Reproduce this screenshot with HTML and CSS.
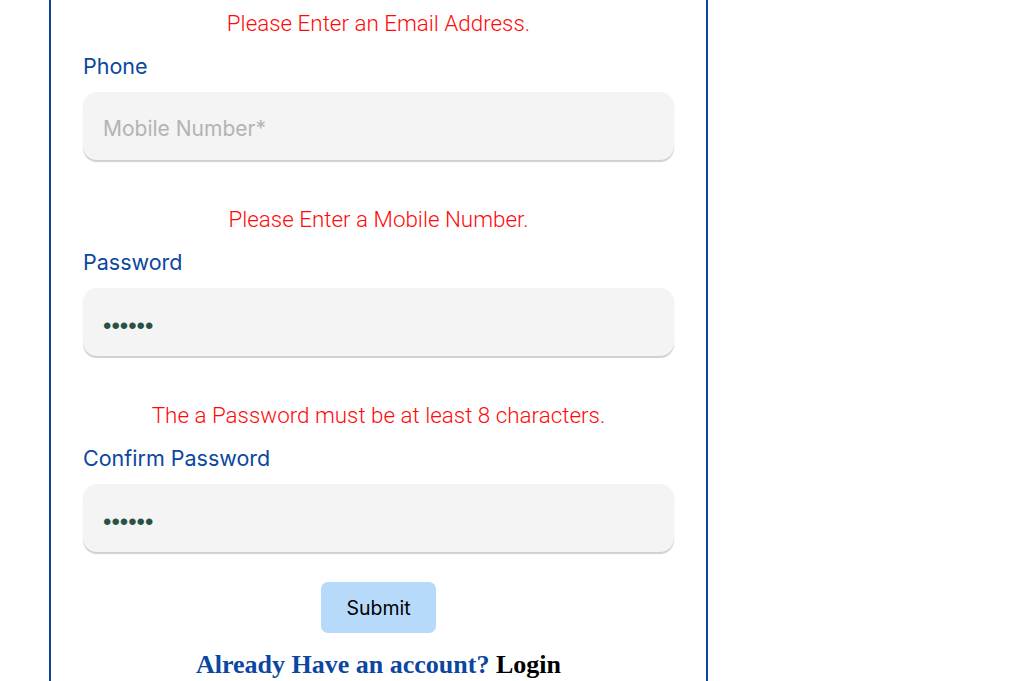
FILE: index.html
```html
<!DOCTYPE html>
<html lang="en">
<head>
<meta charset="utf-8">
<title>Register</title>
<link rel="stylesheet" href="styles.css">
</head>
<body>
<main class="card">
  <form class="form">
    <p class="error">Please Enter an Email Address.</p>
    <div class="field">
      <label class="label" for="phone">Phone</label>
      <input class="input" id="phone" type="text" placeholder="Mobile Number*">
    </div>
    <p class="error">Please Enter a Mobile Number.</p>
    <div class="field">
      <label class="label" for="pw">Password</label>
      <input class="input input-pw" id="pw" type="password" value="123456">
    </div>
    <p class="error">The a Password must be at least 8 characters.</p>
    <div class="field field-last">
      <label class="label" for="cpw">Confirm Password</label>
      <input class="input input-pw" id="cpw" type="password" value="123456">
    </div>
    <div class="actions">
      <button class="submit" type="button">Submit</button>
    </div>
    <p class="switch">Already Have an account? <a class="switch-link" href="#">Login</a></p>
  </form>
</main>
</body>
</html>
```
FILE: styles.css
```css
html, body {
  margin: 0;
  padding: 0;
  background: #ffffff;
  overflow: hidden;
}
body {
  font-family: "Inter", "Noto Sans", sans-serif;
}
.card {
  box-sizing: border-box;
  width: 659px;
  margin: -20px 0 0 49px;
  padding: 29px 32px 40px;
  border: 2px solid #0b47a0;
}
.form {
  display: flex;
  flex-direction: column;
}
.error {
  margin: 0;
  padding-top: 0;
  font-family: "Roboto", sans-serif;
  font-weight: 300;
  font-size: 22.4px;
  line-height: 25px;
  color: #ff0a0a;
  text-align: center;
}
.field {
  display: flex;
  flex-direction: column;
  margin: 18px 0 47px;
}
.field-last {
  margin-bottom: 30px;
}
.label {
  font-size: 21.5px;
  line-height: 24px;
  color: #0b47a0;
  margin-bottom: 14px;
}
.input {
  box-sizing: border-box;
  width: 100%;
  height: 68px;
  border: none;
  border-radius: 14px;
  background: #f4f4f4;
  box-shadow: 0 2px 1px #cfcfcf;
  padding: 4px 20px 0;
  font-family: "Inter", sans-serif;
  font-size: 21px;
  color: #2a5241;
  outline: none;
}
.input::placeholder {
  color: #b3b3b3;
}
.input-pw {
  padding-top: 8px;
  font-family: "Liberation Sans", sans-serif;
  font-size: 24px;
  letter-spacing: 0;
}
.actions {
  display: flex;
  justify-content: center;
}
.submit {
  width: 115px;
  height: 51px;
  border: none;
  border-radius: 7px;
  background: #b7dafb;
  color: #000;
  font-family: "Inter", sans-serif;
  font-size: 19.5px;
}
.switch {
  margin: 17px 0 0;
  font-family: "Liberation Serif", serif;
  font-weight: 700;
  font-size: 26px;
  line-height: 30px;
  color: #0b47a0;
  text-align: center;
}
.switch-link {
  color: #000;
  text-decoration: none;
}
```
